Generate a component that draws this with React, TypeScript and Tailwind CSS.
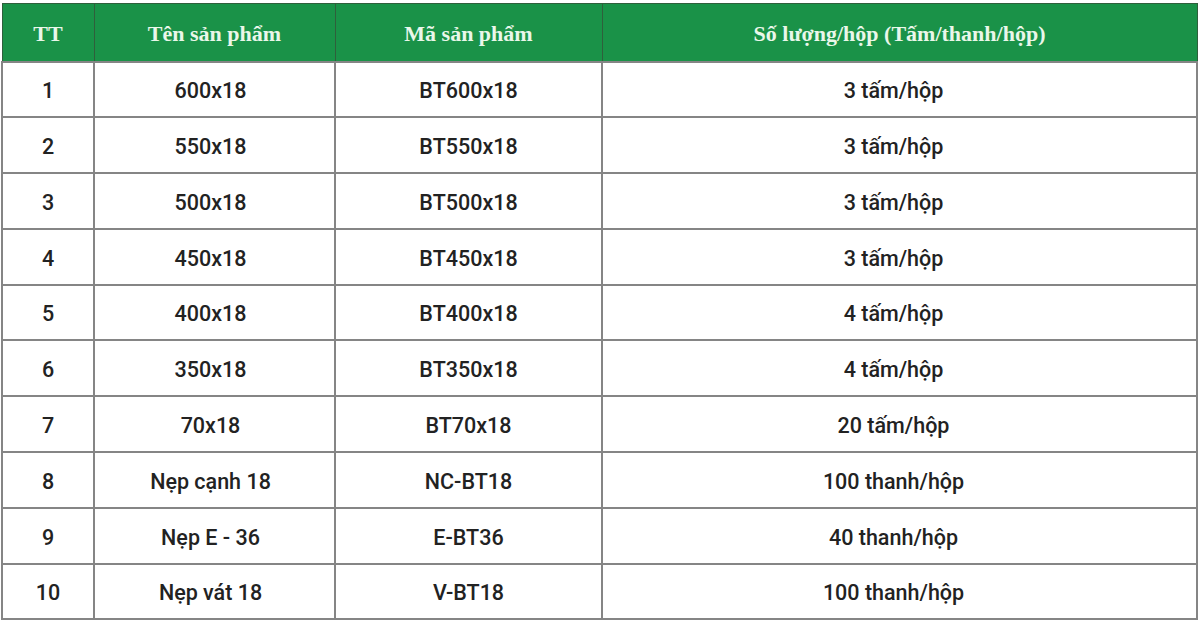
import React from 'react';

const rows = [
  ['1', '600x18', 'BT600x18', '3 tấm/hộp'],
  ['2', '550x18', 'BT550x18', '3 tấm/hộp'],
  ['3', '500x18', 'BT500x18', '3 tấm/hộp'],
  ['4', '450x18', 'BT450x18', '3 tấm/hộp'],
  ['5', '400x18', 'BT400x18', '4 tấm/hộp'],
  ['6', '350x18', 'BT350x18', '4 tấm/hộp'],
  ['7', '70x18', 'BT70x18', '20 tấm/hộp'],
  ['8', 'Nẹp cạnh 18', 'NC-BT18', '100 thanh/hộp'],
  ['9', 'Nẹp E - 36', 'E-BT36', '40 thanh/hộp'],
  ['10', 'Nẹp vát 18', 'V-BT18', '100 thanh/hộp'],
];

export default function App() {
  return (
    <div className="h-[630px] w-[1200px] bg-white pl-px pt-[3px]">
      <table className="w-[1197px] table-fixed border-collapse">
        <colgroup>
          <col className="w-[92px]" />
          <col className="w-[241px]" />
          <col className="w-[267px]" />
          <col />
        </colgroup>
        <thead>
          <tr className="h-[58px] bg-[#1a9248] font-['Liberation_Serif',serif] text-[22px] font-bold text-[#eaf7ea]">
            <th className="border border-[#2f5f3c] pt-[3px]">TT</th>
            <th className="border border-[#2f5f3c] pt-[3px]">Tên sản phẩm</th>
            <th className="border border-[#2f5f3c] pt-[3px]">Mã sản phẩm</th>
            <th className="border border-[#2f5f3c] pt-[3px]">Số lượng/hộp (Tấm/thanh/hộp)</th>
          </tr>
        </thead>
        <tbody className="font-['Roboto',sans-serif] text-[21.5px] font-medium text-[#222]">
          {rows.map((r) => (
            <tr key={r[0]} className="h-[55.8px]">
              <td className="border-2 border-[#858585] pt-1 text-center">{r[0]}</td>
              <td className="border-2 border-[#858585] pr-2 pt-1 text-center">{r[1]}</td>
              <td className="border-2 border-[#858585] pt-1 text-center">{r[2]}</td>
              <td className="border-2 border-[#858585] pr-3 pt-1 text-center">{r[3]}</td>
            </tr>
          ))}
        </tbody>
      </table>
    </div>
  );
}
